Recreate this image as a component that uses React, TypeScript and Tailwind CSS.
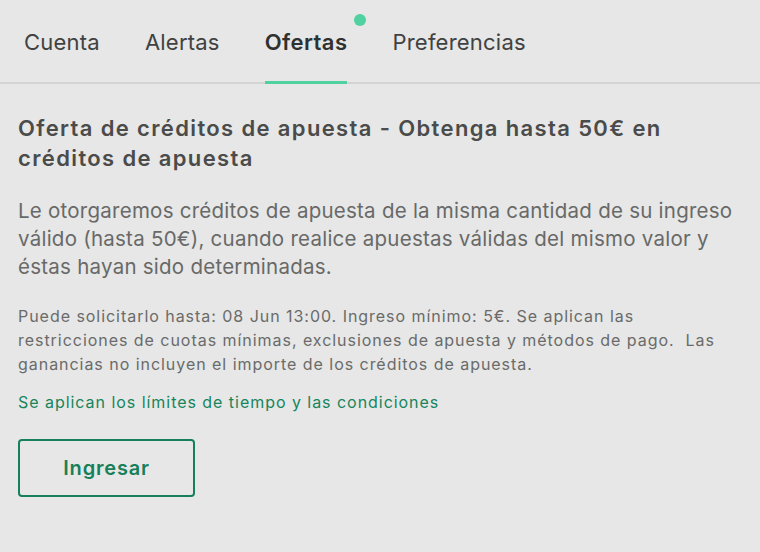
export default function App() {
  const tabs = ["Cuenta", "Alertas", "Ofertas", "Preferencias"];
  return (
    <div className="h-[552px] w-[760px] overflow-hidden bg-[#e6e7e6] font-['Inter',sans-serif]">
      <div className="flex h-[84px] items-end gap-[45px] border-b-2 border-[#d3d4d3] px-6">
        {tabs.map((t) => (
          <div key={t} className="relative flex flex-col items-center">
            <span
              className={
                t === "Ofertas"
                  ? "pb-[25px] text-[22px] leading-[30px] font-semibold tracking-[0.02em] text-[#2f3130]"
                  : "pb-[25px] text-[22px] leading-[30px] tracking-[0.01em] text-[#404241]"
              }
            >
              {t}
            </span>
            {t === "Ofertas" && (
              <>
                <span className="absolute -right-[19px] top-[-13px] h-[12px] w-[12px] rounded-full bg-[#4fd1a0]" />
                <span className="absolute -bottom-[2px] left-0 h-[3px] w-full bg-[#4fd1a0]" />
              </>
            )}
          </div>
        ))}
      </div>
      <div className="pl-[18px] pr-[22px] pt-[29px]">
        <h1 className="text-[22px] leading-[30px] font-semibold tracking-[0.062em] text-[#4a4b4a]">
          Oferta de créditos de apuesta - Obtenga hasta 50€ en créditos de apuesta
        </h1>
        <p className="mt-[24px] text-[20.5px] leading-[28px] tracking-[0.012em] text-[#686968]">
          Le otorgaremos créditos de apuesta de la misma cantidad de su ingreso válido (hasta 50€), cuando
          realice apuestas válidas del mismo valor y éstas hayan sido determinadas.
        </p>
        <p className="mt-[23px] pr-[10px] text-[16px] leading-[24px] tracking-[0.06em] text-[#6a6b6a]">
          Puede solicitarlo hasta: 08 Jun 13:00. Ingreso mínimo: 5€. Se aplican las restricciones de cuotas
          mínimas, exclusiones de apuesta y métodos de pago.&nbsp; Las ganancias no incluyen el importe de los
          créditos de apuesta.
        </p>
        <a className="mt-[14px] block text-[16px] leading-[24px] tracking-[0.06em] text-[#16855c]">
          Se aplican los límites de tiempo y las condiciones
        </a>
        <button className="mt-[25px] h-[58px] w-[177px] rounded-[4px] border-2 border-[#16805a] text-[20px] font-semibold tracking-[0.04em] text-[#16805a]">
          Ingresar
        </button>
      </div>
    </div>
  );
}
